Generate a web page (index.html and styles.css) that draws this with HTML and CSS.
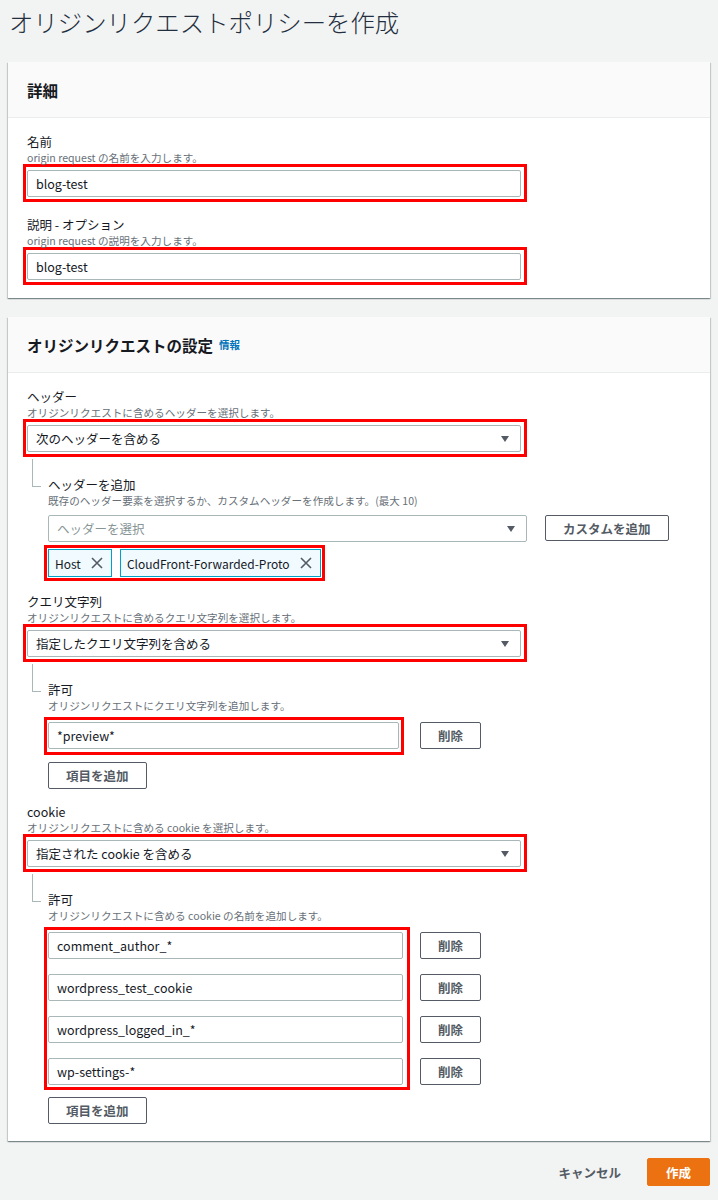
FILE: index.html
```html
<!DOCTYPE html>
<html lang="ja">
<head>
    <meta charset="UTF-8">
    <meta name="viewport" content="width=device-width, initial-scale=1.0">
    <title>オリジンリクエストポリシーを作成</title>
    <link rel="stylesheet" href="styles.css">
</head>
<body>
    <div class="page">
        <h1 class="page-title">オリジンリクエストポリシーを作成</h1>

        <div class="card">
            <div class="card-header">
                <h2>詳細</h2>
            </div>
            <div class="card-body">
                <div class="field">
                    <div class="label">名前</div>
                    <div class="desc">origin request の名前を入力します。</div>
                    <div class="mark mark-full"><input class="input" type="text" value="blog-test" readonly></div>
                </div>
                <div class="field">
                    <div class="label">説明 - オプション</div>
                    <div class="desc">origin request の説明を入力します。</div>
                    <div class="mark mark-full"><input class="input" type="text" value="blog-test" readonly></div>
                </div>
            </div>
        </div>

        <div class="card">
            <div class="card-header">
                <h2>オリジンリクエストの設定</h2>
                <a class="info" href="#">情報</a>
            </div>
            <div class="card-body card-body-tall">
                <!-- ヘッダー -->
                <div class="field">
                    <div class="label">ヘッダー</div>
                    <div class="desc">オリジンリクエストに含めるヘッダーを選択します。</div>
                    <div class="mark mark-full">
                        <div class="select">次のヘッダーを含める<span class="caret"></span></div>
                    </div>
                    <div class="sub">
                        <div class="label">ヘッダーを追加</div>
                        <div class="desc">既存のヘッダー要素を選択するか、カスタムヘッダーを作成します。(最大 10)</div>
                        <div class="row">
                            <div class="select select-wide placeholder">ヘッダーを選択<span class="caret"></span></div>
                            <button class="btn btn-custom">カスタムを追加</button>
                        </div>
                        <div class="mark mark-tokens">
                            <span class="token">Host
                                <svg width="12" height="12" viewBox="0 0 12 12"><path d="M1 1L11 11M11 1L1 11" stroke="#545b64" stroke-width="1.6" fill="none"/></svg>
                            </span>
                            <span class="token">CloudFront-Forwarded-Proto
                                <svg width="12" height="12" viewBox="0 0 12 12"><path d="M1 1L11 11M11 1L1 11" stroke="#545b64" stroke-width="1.6" fill="none"/></svg>
                            </span>
                        </div>
                    </div>
                </div>

                <!-- クエリ文字列 -->
                <div class="field">
                    <div class="label">クエリ文字列</div>
                    <div class="desc">オリジンリクエストに含めるクエリ文字列を選択します。</div>
                    <div class="mark mark-full">
                        <div class="select">指定したクエリ文字列を含める<span class="caret"></span></div>
                    </div>
                    <div class="sub">
                        <div class="label">許可</div>
                        <div class="desc">オリジンリクエストにクエリ文字列を追加します。</div>
                        <div class="list">
                            <div class="mark mark-list">
                                <input class="input" type="text" value="*preview*" readonly>
                            </div>
                            <div class="list-actions">
                                <button class="btn">削除</button>
                            </div>
                        </div>
                        <button class="btn btn-add">項目を追加</button>
                    </div>
                </div>

                <!-- cookie -->
                <div class="field">
                    <div class="label">cookie</div>
                    <div class="desc">オリジンリクエストに含める cookie を選択します。</div>
                    <div class="mark mark-full">
                        <div class="select">指定された cookie を含める<span class="caret"></span></div>
                    </div>
                    <div class="sub">
                        <div class="label">許可</div>
                        <div class="desc">オリジンリクエストに含める cookie の名前を追加します。</div>
                        <div class="list list-cookies">
                            <div class="mark mark-list mark-cookies">
                                <input class="input" type="text" value="comment_author_*" readonly>
                                <input class="input" type="text" value="wordpress_test_cookie" readonly>
                                <input class="input" type="text" value="wordpress_logged_in_*" readonly>
                                <input class="input" type="text" value="wp-settings-*" readonly>
                            </div>
                            <div class="list-actions">
                                <button class="btn">削除</button>
                                <button class="btn">削除</button>
                                <button class="btn">削除</button>
                                <button class="btn">削除</button>
                            </div>
                        </div>
                        <button class="btn btn-add">項目を追加</button>
                    </div>
                </div>
            </div>
        </div>

        <div class="footer">
            <button class="link-btn">キャンセル</button>
            <button class="btn-primary">作成</button>
        </div>
    </div>
</body>
</html>
```

FILE: styles.css
```css
* {
    box-sizing: border-box;
}

body {
    margin: 0;
    background-color: #f2f3f3;
    font-family: "Noto Sans CJK JP", "Noto Sans", sans-serif;
    font-size: 12.5px;
    color: #16191f;
}

.page {
    padding: 7px 8px 12px;
}

.page-title {
    margin: 0 0 25px 1px;
    font-size: 24.4px;
    line-height: 30px;
    font-weight: 300;
    color: #232f3e;
}

/* cards */
.card {
    background-color: #fff;
    margin-bottom: 19px;
    box-shadow: 0 1px 1px 0 rgba(0, 28, 36, 0.3), 1px 1px 1px 0 rgba(0, 28, 36, 0.15), -1px 1px 1px 0 rgba(0, 28, 36, 0.15);
}

.card-header {
    display: flex;
    align-items: center;
    gap: 6px;
    height: 56px;
    padding: 0 19px;
    background-color: #fafafa;
    border-bottom: 1px solid #eaeded;
}

.card-header h2 {
    margin: 0;
    font-size: 15.5px;
    line-height: 20px;
    font-weight: 700;
}

.info {
    font-size: 10.5px;
    font-weight: 700;
    color: #0073bb;
    text-decoration: none;
}

.card-body {
    padding: 16px 19px 13px;
}

.card-body-tall {
    padding-bottom: 17px;
}

.field + .field {
    margin-top: 15px;
}

.label {
    line-height: 16px;
}

.desc {
    margin-top: 2px;
    font-size: 10.6px;
    line-height: 12px;
    color: #687078;
}

/* red annotation boxes */
.mark {
    border: 3px solid #ff0000;
    margin-left: -4px;
}

.mark-full {
    width: 504px;
    padding: 3px 3px 2px 1px;
}

/* inputs */
.input,
.select {
    display: flex;
    align-items: center;
    width: 100%;
    height: 27px;
    padding: 0 8px;
    border: 1px solid #aab7b8;
    border-radius: 2px;
    background-color: #fff;
    font: inherit;
    color: #16191f;
    outline: none;
}

.select {
    justify-content: space-between;
    padding-right: 11px;
}

.placeholder {
    color: #879596;
}

.caret {
    width: 0;
    height: 0;
    border-left: 4.5px solid transparent;
    border-right: 4.5px solid transparent;
    border-top: 6px solid #545b64;
}

/* nested section with tree line */
.sub {
    position: relative;
    margin-left: 5px;
    padding: 20px 0 0 16px;
}

.sub::before {
    content: "";
    position: absolute;
    left: 0;
    top: 2px;
    width: 8px;
    height: 27px;
    border-left: 1px solid #aab7b8;
    border-bottom: 1px solid #aab7b8;
}

.row {
    display: flex;
    align-items: flex-start;
    gap: 18px;
    margin-top: 8px;
}

.select-wide {
    width: 479px;
}

.btn {
    height: 27px;
    padding: 0 17px;
    border: 1px solid #545b64;
    border-radius: 2px;
    background-color: #fff;
    color: #545b64;
    font: inherit;
    font-weight: 700;
}

.btn-custom {
    height: 26px;
}

.btn-add {
    margin-top: 7px;
}

/* tokens */
.mark-tokens {
    display: flex;
    width: fit-content;
    gap: 8px;
    padding: 1px;
    margin-top: 3px;
    margin-bottom: -2px;
}

.token {
    display: flex;
    align-items: center;
    gap: 10px;
    height: 28px;
    padding: 0 8px 0 6px;
    background-color: #f1faff;
    border: 1px solid #00a1c9;
    font-size: 12px;
}

/* allow lists */
.list {
    display: flex;
    align-items: flex-start;
    gap: 16px;
    margin-top: 5px;
}

.list-cookies {
    gap: 10px;
}

.mark-list {
    display: flex;
    flex-direction: column;
    gap: 15px;
    padding: 2px 2px 3px 1px;
}

.mark-list .input {
    width: 351px;
}

.mark-cookies {
    padding: 2px 4px 2px 1px;
}

.mark-cookies .input {
    width: 355px;
}

.list-actions {
    display: flex;
    flex-direction: column;
    gap: 15px;
    padding-top: 5px;
}

/* footer */
.footer {
    display: flex;
    justify-content: flex-end;
    align-items: center;
    gap: 26px;
    margin-top: -2px;
}

.link-btn {
    padding: 0;
    border: 0;
    background: none;
    font: inherit;
    font-weight: 700;
    color: #545b64;
}

.btn-primary {
    height: 28px;
    padding: 0 18px;
    border: 1px solid #ec7211;
    border-radius: 2px;
    background-color: #ec7211;
    color: #fff;
    font: inherit;
    font-weight: 700;
}
```
